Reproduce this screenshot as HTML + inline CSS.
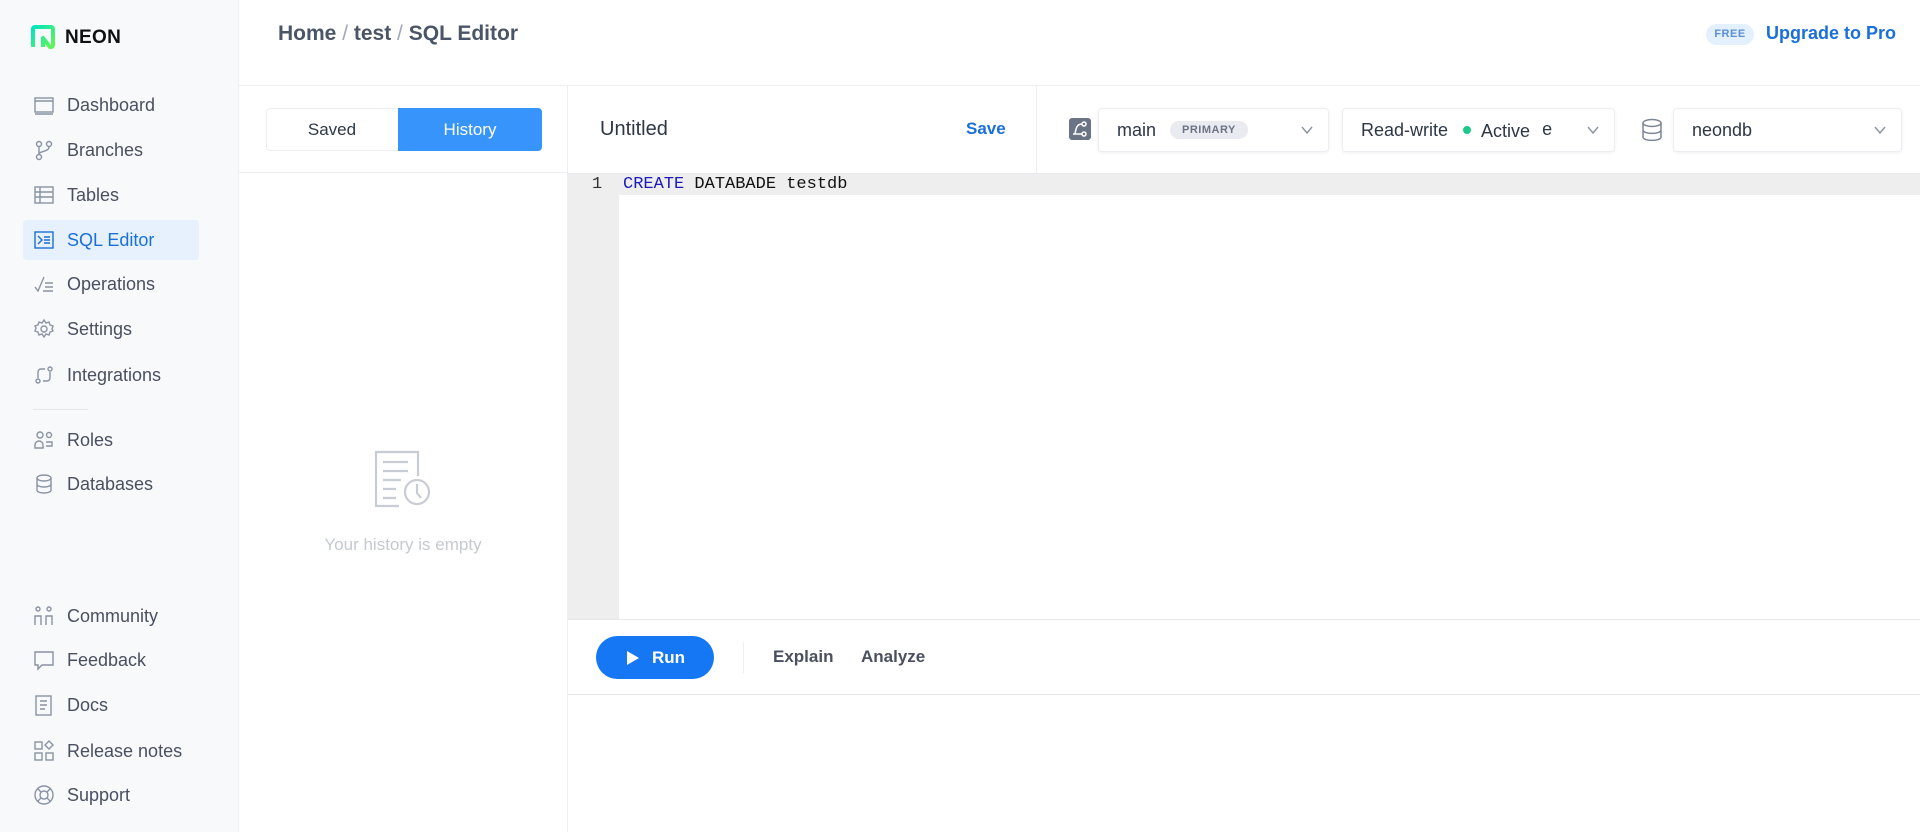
<!DOCTYPE html>
<html><head><meta charset="utf-8"><style>
*{box-sizing:border-box;margin:0;padding:0}
body{width:1920px;height:832px;overflow:hidden;background:#fff;font-family:"Liberation Sans",sans-serif;position:relative;color:#2d3748}
.abs{position:absolute}
#side{left:0;top:0;width:239px;height:832px;background:#f7f9fb;border-right:1px solid #eef0f3}
.nav{position:absolute;left:33px;height:24px;display:flex;align-items:center;font-size:18px;color:#4a5060}
.nav svg{width:22px;height:22px;margin-right:12px;stroke:#8a93a3;fill:none;stroke-width:1.4}
.act{position:absolute;left:23px;top:220px;width:176px;height:40px;background:#e6f1fd;border-radius:4px}
.sel{position:absolute;top:108px;height:44px;border:1px solid #eceef1;border-radius:4px;box-shadow:0 1px 3px rgba(0,0,0,.06);background:#fff;font-size:18px;display:flex;align-items:center;color:#2d3748}
.chev{position:absolute;right:14px;top:14px;width:14px;height:14px}
</style></head><body>
<div id="side" class="abs"></div>
<svg class="abs" style="left:30px;top:24px" width="26" height="26" viewBox="0 0 26 26"><defs><linearGradient id="g" x1="0" y1="0" x2="1" y2="1"><stop offset="0" stop-color="#00e5bf"/><stop offset="1" stop-color="#63f655"/></linearGradient></defs><path d="M3 23V5a2 2 0 0 1 2-2h16a2 2 0 0 1 2 2v16a2 2 0 0 1-2 2h-1l-7-9v9" fill="none" stroke="url(#g)" stroke-width="4" stroke-linejoin="round"/></svg>
<div class="abs" style="left:65px;top:27px;font-size:19px;font-weight:bold;color:#111;letter-spacing:.3px">NEON</div>
<div class="act"></div>
<div class="nav" style="top:93px"><svg viewBox="0 0 22 22"><rect x="2" y="4" width="18" height="14"/><path d="M2 7h18M2 20h18"/></svg>Dashboard</div>
<div class="nav" style="top:138px"><svg viewBox="0 0 22 22"><circle cx="6" cy="5" r="2.5"/><circle cx="16" cy="5" r="2.5"/><circle cx="6" cy="18" r="2.5"/><path d="M6 8v7M16 8c0 5-10 4-10 7"/></svg>Branches</div>
<div class="nav" style="top:183px"><svg viewBox="0 0 22 22"><rect x="2" y="3" width="18" height="16"/><path d="M2 8h18M2 13h18M7 3v16"/></svg>Tables</div>
<div class="nav" style="top:228px;color:#1a6fd8"><svg viewBox="0 0 22 22" style="stroke:#1a6fd8"><rect x="2" y="3" width="18" height="16"/><path d="M5 7l4 4-4 4M11 8h6M11 11h6M11 14h6"/></svg>SQL Editor</div>
<div class="nav" style="top:272px"><svg viewBox="0 0 22 22"><path d="M2 14l3 4 6-14M12 10h8M12 14h8M10 18h10"/></svg>Operations</div>
<div class="nav" style="top:317px"><svg viewBox="0 0 22 22"><circle cx="11" cy="11" r="3"/><path d="M11 2l2 3 3-1 1 3 3 1-1 3 1 2-3 1-1 3-3-1-2 3-2-3-3 1-1-3-3-1 1-3-1-2 3-1 1-3 3 1z"/></svg>Settings</div>
<div class="nav" style="top:363px"><svg viewBox="0 0 22 22"><circle cx="5" cy="17" r="2"/><circle cx="17" cy="5" r="2"/><path d="M5 14V8a3 3 0 0 1 3-3h4M17 8v6a3 3 0 0 1-3 3h-4"/></svg>Integrations</div>
<div class="abs" style="left:33px;top:409px;width:55px;height:1px;background:#e3e6ea"></div>
<div class="nav" style="top:428px"><svg viewBox="0 0 22 22"><circle cx="7" cy="6" r="3"/><circle cx="16" cy="6" r="2.5"/><path d="M2 19v-3a4 4 0 0 1 8 0v3zM13 13h6v4h-6"/></svg>Roles</div>
<div class="nav" style="top:472px"><svg viewBox="0 0 22 22"><ellipse cx="11" cy="5" rx="7" ry="3"/><path d="M4 5v12c0 4 14 4 14 0V5M4 11c0 4 14 4 14 0"/></svg>Databases</div>
<div class="nav" style="top:604px"><svg viewBox="0 0 22 22"><circle cx="5" cy="4" r="2"/><circle cx="16" cy="4" r="2"/><path d="M2 20v-9h6v9M13 20v-9h6v9"/></svg>Community</div>
<div class="nav" style="top:648px"><svg viewBox="0 0 22 22"><path d="M2 3h18v13H9l-4 4v-4H2z"/></svg>Feedback</div>
<div class="nav" style="top:693px"><svg viewBox="0 0 22 22"><rect x="3" y="2" width="15" height="19"/><path d="M7 7h7M7 11h7M7 15h5"/></svg>Docs</div>
<div class="nav" style="top:739px"><svg viewBox="0 0 22 22"><rect x="2" y="2" width="7" height="7"/><path d="M16 1l4 4-4 4-4-4z"/><rect x="2" y="13" width="7" height="7"/><rect x="13" y="13" width="7" height="7"/></svg>Release notes</div>
<div class="nav" style="top:783px"><svg viewBox="0 0 22 22"><circle cx="11" cy="11" r="9"/><circle cx="11" cy="11" r="4"/><path d="M5 5l3 3M17 5l-3 3M5 17l3-3M17 17l-3-3"/></svg>Support</div>

<div class="abs" style="left:278px;top:22px;font-size:21px;font-weight:bold;color:#4a5568">Home <span style="color:#a0a8b5;font-weight:normal">/</span> test <span style="color:#a0a8b5;font-weight:normal">/</span> SQL Editor</div>
<div class="abs" style="left:1706px;top:24px;width:48px;height:21px;background:#e3f0fd;border-radius:11px;font-size:11px;font-weight:bold;color:#5b8fd6;text-align:center;line-height:21px;letter-spacing:.5px">FREE</div>
<div class="abs" style="left:1766px;top:23px;font-size:18px;font-weight:bold;color:#1a6fd8">Upgrade to Pro</div>
<div class="abs" style="left:239px;top:85px;width:1681px;height:1px;background:#eceef1"></div>

<div class="abs" style="left:567px;top:86px;width:1px;height:746px;background:#eceef1"></div>
<div class="abs" style="left:266px;top:108px;width:276px;height:43px;border:1px solid #eceef1;border-radius:4px;background:#fff"></div>
<div class="abs" style="left:266px;top:108px;width:132px;height:43px;font-size:17px;line-height:43px;text-align:center;color:#2d3748">Saved</div>
<div class="abs" style="left:398px;top:108px;width:144px;height:43px;background:#3794fb;border-radius:0 4px 4px 0;font-size:17px;line-height:43px;text-align:center;color:#fff">History</div>
<div class="abs" style="left:239px;top:172px;width:328px;height:1px;background:#eceef1"></div>
<svg class="abs" style="left:373px;top:450px" width="60" height="60" viewBox="0 0 60 60" fill="none" stroke="#c8ccd4" stroke-width="2.2"><path d="M26 56H3V2h42v24"/><path d="M10 12h25M10 21h25M10 30h18M10 39h13M10 48h13"/><circle cx="44" cy="42" r="12" fill="#fff"/><path d="M44 34v9l4 5"/></svg>
<div class="abs" style="left:239px;top:535px;width:328px;text-align:center;font-size:17px;color:#c5cad1">Your history is empty</div>

<div class="abs" style="left:600px;top:118px;font-size:20px;color:#2d3748">Untitled</div>
<div class="abs" style="left:966px;top:119px;font-size:17px;font-weight:bold;color:#1a6fd8">Save</div>
<div class="abs" style="left:1036px;top:86px;width:1px;height:87px;background:#eceef1"></div>
<svg class="abs" style="left:1069px;top:118px" width="22" height="22" viewBox="0 0 22 22"><rect width="22" height="22" rx="3" fill="#6b7485"/><g fill="none" stroke="#fff" stroke-width="1.5"><circle cx="15" cy="6" r="2"/><circle cx="15" cy="16" r="2"/><path d="M4 16h9M13 6c-5 0-6 4-7 10"/></g></svg>
<div class="sel" style="left:1098px;width:231px;padding-left:18px">main<span style="margin-left:14px;background:#e9ebf0;color:#6b7485;font-size:11px;font-weight:bold;padding:3px 12px;border-radius:10px;letter-spacing:.5px">PRIMARY</span><svg class="chev" viewBox="0 0 14 14"><path d="M2 4l5 6 5-6" fill="none" stroke="#8a93a3" stroke-width="1.4"/></svg></div>
<div class="sel" style="left:1342px;width:273px;padding-left:18px">Read-write<span style="display:inline-block;width:8px;height:8px;border-radius:50%;background:#1cc88a;margin:0 10px 0 15px"></span><span style="margin-top:3px">Active</span><span style="margin-left:12px;margin-top:-2px">e</span><svg class="chev" viewBox="0 0 14 14"><path d="M2 4l5 6 5-6" fill="none" stroke="#8a93a3" stroke-width="1.4"/></svg></div>
<svg class="abs" style="left:1641px;top:118px" width="22" height="24" viewBox="0 0 22 24" fill="none" stroke="#7c8595" stroke-width="1.5"><ellipse cx="11" cy="5" rx="9" ry="3.5"/><path d="M2 5v14c0 4.5 18 4.5 18 0V5M2 12c0 4.5 18 4.5 18 0"/></svg>
<div class="sel" style="left:1673px;width:229px;padding-left:18px">neondb<svg class="chev" viewBox="0 0 14 14"><path d="M2 4l5 6 5-6" fill="none" stroke="#8a93a3" stroke-width="1.4"/></svg></div>

<div class="abs" style="left:568px;top:173px;width:1352px;height:1px;background:#e6e8eb"></div>
<div class="abs" style="left:568px;top:174px;width:51px;height:445px;background:#eeeeee"></div>
<div class="abs" style="left:568px;top:174px;width:1352px;height:21px;background:#eeeeee"></div>
<div class="abs" style="left:592px;top:174px;font-family:'Liberation Mono',monospace;font-size:17px;line-height:21px;color:#333">1</div>
<div class="abs" style="left:623px;top:174px;font-family:'Liberation Mono',monospace;font-size:17px;line-height:21px;color:#111;white-space:pre"><span style="color:#1b1bb8">CREATE</span> DATABADE testdb</div>
<div class="abs" style="left:568px;top:619px;width:1352px;height:1px;background:#e6e8eb"></div>
<div class="abs" style="left:596px;top:636px;width:118px;height:43px;background:#1677f5;border-radius:22px;color:#fff;font-size:17px;font-weight:bold;display:flex;align-items:center;padding-left:30px"><svg width="14" height="16" viewBox="0 0 14 16" style="margin-right:12px"><path d="M1 1l12 7-12 7z" fill="#fff"/></svg>Run</div>
<div class="abs" style="left:743px;top:642px;width:1px;height:31px;background:#eceef1"></div>
<div class="abs" style="left:773px;top:647px;font-size:17px;font-weight:bold;color:#4a5060">Explain</div>
<div class="abs" style="left:861px;top:647px;font-size:17px;font-weight:bold;color:#4a5060">Analyze</div>
<div class="abs" style="left:568px;top:694px;width:1352px;height:1px;background:#e6e8eb"></div>
</body></html>
